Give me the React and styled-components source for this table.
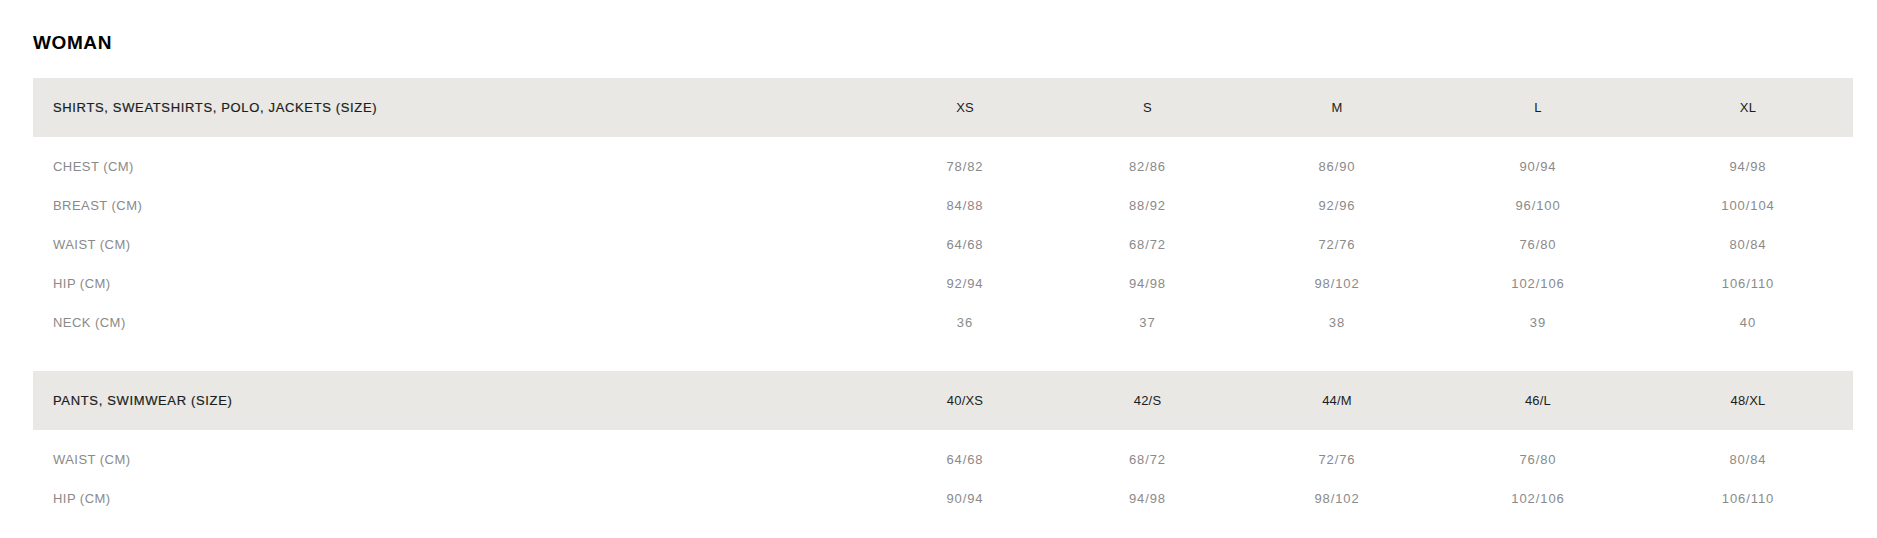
import React from "react";
import styled, { createGlobalStyle } from "styled-components";

const GlobalStyle = createGlobalStyle`
  html, body {
    margin: 0;
    padding: 0;
    background: #ffffff;
  }
  body {
    font-family: "Liberation Sans", Arial, Helvetica, sans-serif;
    -webkit-font-smoothing: antialiased;
  }
`;

const COLUMNS = "843px 178px 187px 192px 210px 210px";

const Page = styled.div`
  padding: 32px 24px 0 33px;
`;

const Title = styled.h2`
  margin: 0 0 24px;
  font-size: 19px;
  line-height: 22px;
  font-weight: 700;
  letter-spacing: 0.6px;
  color: #000;
`;

const Table = styled.section`
  width: 1820px;
  margin-bottom: 29px;

  &:last-child {
    margin-bottom: 0;
  }
`;

const HeadRow = styled.div`
  display: grid;
  grid-template-columns: ${COLUMNS};
  align-items: center;
  height: 59px;
  background: #e9e8e4;
  color: #1a1d22;
  font-size: 13px;
`;

const Body = styled.div`
  padding-top: 10px;
`;

const Row = styled.div`
  display: grid;
  grid-template-columns: ${COLUMNS};
  align-items: center;
  height: 39px;
  color: #8a8a8a;
  font-size: 13px;
`;

const LabelCell = styled.div`
  padding-left: 20px;
  letter-spacing: ${(p) => (p.$head ? "0.65px" : "0.45px")};
  -webkit-text-stroke: ${(p) => (p.$head ? "0.2px" : "0")};
  white-space: nowrap;
`;

const ValueCell = styled.div`
  text-align: center;
  letter-spacing: ${(p) => (p.$head ? "0.2px" : "0.9px")};
  white-space: nowrap;
`;

const tables = [
  {
    title: "SHIRTS, SWEATSHIRTS, POLO, JACKETS (SIZE)",
    sizes: ["XS", "S", "M", "L", "XL"],
    rows: [
      ["CHEST (CM)", "78/82", "82/86", "86/90", "90/94", "94/98"],
      ["BREAST (CM)", "84/88", "88/92", "92/96", "96/100", "100/104"],
      ["WAIST (CM)", "64/68", "68/72", "72/76", "76/80", "80/84"],
      ["HIP (CM)", "92/94", "94/98", "98/102", "102/106", "106/110"],
      ["NECK (CM)", "36", "37", "38", "39", "40"],
    ],
  },
  {
    title: "PANTS, SWIMWEAR (SIZE)",
    sizes: ["40/XS", "42/S", "44/M", "46/L", "48/XL"],
    rows: [
      ["WAIST (CM)", "64/68", "68/72", "72/76", "76/80", "80/84"],
      ["HIP (CM)", "90/94", "94/98", "98/102", "102/106", "106/110"],
    ],
  },
];

function SizeTable({ data }) {
  return (
    <Table>
      <HeadRow>
        <LabelCell $head>{data.title}</LabelCell>
        {data.sizes.map((s) => (
          <ValueCell $head key={s}>
            {s}
          </ValueCell>
        ))}
      </HeadRow>
      <Body>
        {data.rows.map(([label, ...vals]) => (
          <Row key={label}>
            <LabelCell>{label}</LabelCell>
            {vals.map((v, i) => (
              <ValueCell key={i}>{v}</ValueCell>
            ))}
          </Row>
        ))}
      </Body>
    </Table>
  );
}

export default function App() {
  return (
    <>
      <GlobalStyle />
      <Page>
        <Title>WOMAN</Title>
        {tables.map((t) => (
          <SizeTable key={t.title} data={t} />
        ))}
      </Page>
    </>
  );
}
